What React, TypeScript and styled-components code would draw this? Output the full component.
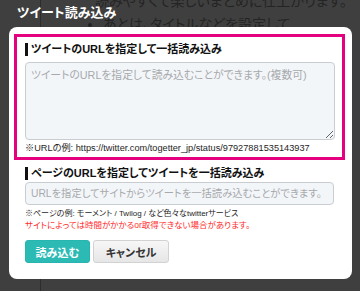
import React from 'react';
import styled, { createGlobalStyle } from 'styled-components';

const FONT = `"Liberation Sans", "Noto Sans CJK JP", sans-serif`;

const GlobalStyle = createGlobalStyle`
  body {
    margin: 0;
    background: #3f3f3f;
  }
  * {
    box-sizing: border-box;
  }
`;

const Screen = styled.div`
  position: relative;
  width: 360px;
  height: 291px;
  overflow: hidden;
  background: #3f3f3f;
  font-family: ${FONT};
  font-feature-settings: "palt";
`;

// the page under the dimmed overlay
const Backdrop = styled.div`
  display: flex;
  height: 100%;
`;

const SideRail = styled.div`
  width: 41px;
  flex: none;
  border-right: 1px solid #2c2c2c;
`;

const BackContent = styled.div`
  flex: 1;
  margin-top: -7px;
  padding-left: 8px;
  color: #242424;
  font-size: 14px;
  line-height: 16px;
`;

const BackLine = styled.p`
  margin: 0 0 7px 46px;
  white-space: nowrap;
`;

const BackList = styled.ul`
  margin: 0;
  padding-left: 54px;
  white-space: nowrap;
`;

// overlay and modal
const Overlay = styled.div`
  position: absolute;
  inset: 0;
  display: flex;
  flex-direction: column;
  padding-left: 9px;
`;

const DialogTitle = styled.h2`
  margin: 0;
  height: 27px;
  padding: 5px 0 0 8px;
  color: #fff;
  font-size: 13px;
  font-weight: bold;
  line-height: 16px;
`;

const Modal = styled.div`
  width: 343px;
  background: #fff;
  border-radius: 8px;
  padding: 7px 7px 16px 5px;
`;

const Highlight = styled.div`
  border: 3px solid #e4007f;
  padding: 6px 7px 3px 8px;
`;

const Section = styled.div`
  padding: 7px 0 0 11px;
`;

const Heading = styled.div`
  border-left: 3px solid #111;
  padding-left: 3px;
  color: #111;
  font-size: 11px;
  font-weight: bold;
  line-height: 13px;
`;

const TextArea = styled.textarea`
  display: block;
  width: 100%;
  height: 78px;
  margin-top: 6px;
  padding: 4px 5px;
  border: 1px solid #c9ccd0;
  border-radius: 4px;
  background: #f3f6f9;
  font-family: ${FONT};
  font-feature-settings: "palt";
  font-size: 10.8px;
  line-height: 16px;
  resize: vertical;
  &::placeholder {
    color: #a7a9ac;
  }
`;

const Input = styled.input`
  display: block;
  width: 309px;
  height: 23px;
  margin-top: 2px;
  padding: 0 5px;
  border: 1px solid #c9ccd0;
  border-radius: 4px;
  background: #f3f6f9;
  font-family: ${FONT};
  font-feature-settings: "palt";
  font-size: 10.3px;
  &::placeholder {
    color: #a7a9ac;
  }
`;

const Note = styled.div<{ $warn?: boolean; $size?: number }>`
  margin-top: ${({ $warn }) => ($warn ? '1px' : '3px')};
  color: ${({ $warn }) => ($warn ? '#ff2d2d' : '#1e1e1e')};
  font-size: ${({ $size }) => $size ?? 8.5}px;
  line-height: 11px;
  white-space: nowrap;
`;

const ButtonRow = styled.div`
  display: flex;
  gap: 3px;
  margin-top: 9px;
`;

const Button = styled.button<{ $primary?: boolean }>`
  height: 23px;
  width: ${({ $primary }) => ($primary ? '65px' : '76px')};
  border-radius: 3px;
  border: 1px solid ${({ $primary }) => ($primary ? '#28b4af' : '#d2d2d2')};
  background: ${({ $primary }) =>
    $primary ? '#2cbab5' : 'linear-gradient(#f7f7f7, #e6e6e6)'};
  color: ${({ $primary }) => ($primary ? '#fff' : '#333')};
  font-family: ${FONT};
  font-feature-settings: "palt";
  font-size: 11px;
  font-weight: bold;
  padding: 0;
`;

const App = () => (
  <Screen>
    <GlobalStyle />
    <Backdrop>
      <SideRail />
      <BackContent>
        <BackLine>読みやすくて楽しいまとめに仕上がります。</BackLine>
        <BackList>
          <li>あとは、タイトルなどを設定して</li>
        </BackList>
      </BackContent>
    </Backdrop>
    <Overlay>
      <DialogTitle>ツイート読み込み</DialogTitle>
      <Modal>
        <Highlight>
          <Heading>ツイートのURLを指定して一括読み込み</Heading>
          <TextArea placeholder="ツイートのURLを指定して読み込むことができます。(複数可)" />
          <Note $size={9.2}>※URLの例: https://twitter.com/togetter_jp/status/97927881535143937</Note>
        </Highlight>
        <Section>
          <Heading>ページのURLを指定してツイートを一括読み込み</Heading>
          <Input placeholder="URLを指定してサイトからツイートを一括読み込むことができます。" />
          <Note $size={8}>※ページの例: モーメント / Twilog / など色々なtwitterサービス</Note>
          <Note $warn>サイトによっては時間がかかるor取得できない場合があります。</Note>
          <ButtonRow>
            <Button $primary>読み込む</Button>
            <Button>キャンセル</Button>
          </ButtonRow>
        </Section>
      </Modal>
    </Overlay>
  </Screen>
);

export default App;
